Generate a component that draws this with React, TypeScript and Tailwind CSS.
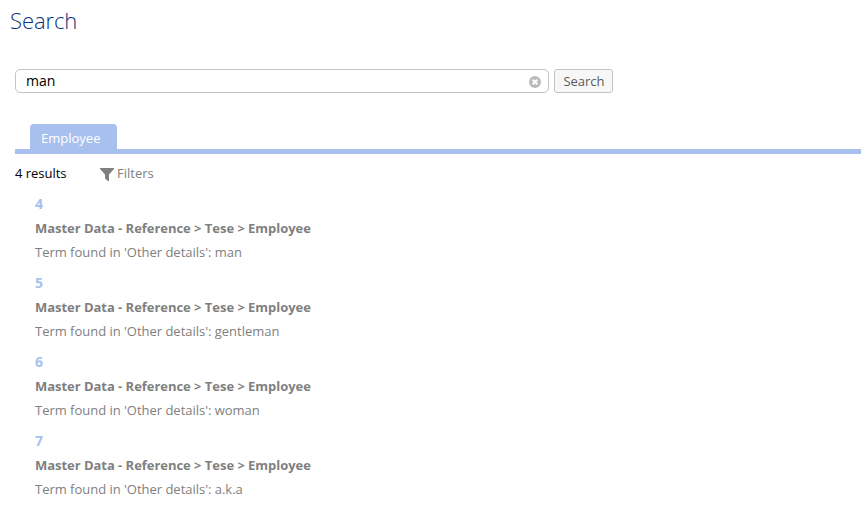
import React from "react";

const results = [
  { id: "4", term: "man" },
  { id: "5", term: "gentleman" },
  { id: "6", term: "woman" },
  { id: "7", term: "a.k.a" },
];

export default function App() {
  return (
    <div className="h-[517px] w-full overflow-hidden bg-white font-['Open_Sans',sans-serif] text-[13px] text-[#808080]">
      <h1 className="pt-1 pl-[10px] text-[22px] leading-[32px] font-light tracking-[-0.08px] text-[#0a3278]">Search</h1>
      <div className="mt-[33px] flex gap-[5px] pl-[15px]">
        <div className="flex h-6 w-[534px] items-center justify-between rounded-[5px] border border-[#c4c4c4] pr-[7px] pl-[10px]">
          <span className="text-[14px] leading-[22px] text-black">man</span>
          <svg className="mt-px size-3" viewBox="0 0 12 12">
            <circle cx="6" cy="6" r="6" fill="#bbb" />
            <path d="M3.7 3.7l4.6 4.6M8.3 3.7L3.7 8.3" stroke="#fff" strokeWidth="2" />
          </svg>
        </div>
        <button className="h-6 w-[59px] rounded-[3px] border border-[#c4c4c4] bg-[#f7f7f7] pl-px leading-[22px] text-[#5a5a5a]">Search</button>
      </div>
      <div className="mt-[31px] ml-[15px] border-b-[5px] border-[#a8c0ee] pl-[15px]">
        <div className="h-[25px] w-[87px] rounded-t-[4px] bg-[#a8c0ee] pl-[11px] leading-[29px] text-white">Employee</div>
      </div>
      <div className="flex h-[38px] items-center pt-[2px] pl-[15px]">
        <span className="w-[85px] tracking-[-0.02px] text-black">4 results</span>
        <svg className="mt-px mr-[3px] h-[13px] w-[14px]" viewBox="0 0 14 13">
          <path d="M0 0h14v1L9 6.5V13H8L5 10.5v-4L0 1z" fill="#808080" />
        </svg>
        <span>Filters</span>
      </div>
      <div className="pl-[35px]">
        {results.map((r) => (
          <div key={r.id} className="h-[79px]">
            <div className="h-6 text-[14px] leading-6 font-bold text-[#a8c0ee]">{r.id}</div>
            <div className="h-6 leading-6 font-bold tracking-[-0.035px]">Master Data - Reference &gt; Tese &gt; Employee</div>
            <div className="h-6 leading-6 tracking-[-0.02px]">Term found in 'Other details': {r.term}</div>
          </div>
        ))}
      </div>
    </div>
  );
}
